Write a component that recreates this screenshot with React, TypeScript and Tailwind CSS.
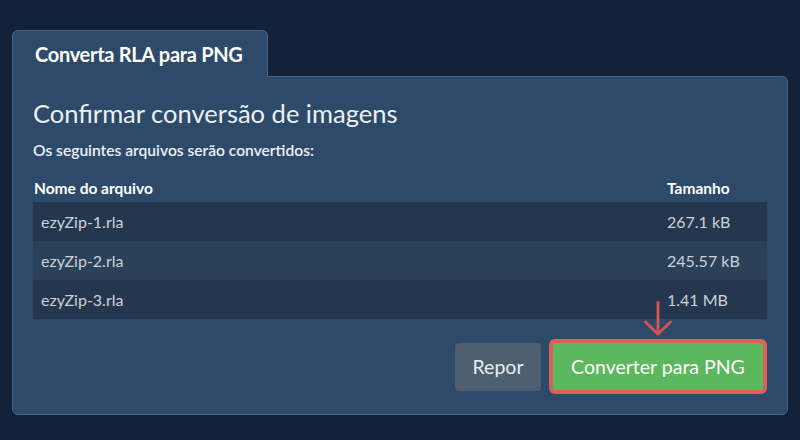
import { useState } from "react";

interface FileRow {
  id: string;
  name: string;
  size: string;
}

const files: FileRow[] = [
  { id: "1", name: "ezyZip-1.rla", size: "267.1 kB" },
  { id: "2", name: "ezyZip-2.rla", size: "245.57 kB" },
  { id: "3", name: "ezyZip-3.rla", size: "1.41 MB" },
];

export default function App() {
  const [converting, setConverting] = useState(false);

  return (
    <div
      className="w-full h-[440px] bg-[#11223a] pt-[30px] px-3 overflow-hidden"
      style={{ fontFamily: "Lato, 'Open Sans', sans-serif" }}
    >
      {/* Tab */}
      <div className="relative z-10 -mb-px w-[256px] h-[47px] bg-[#2d4a6a] border border-b-0 border-[#4a6584] rounded-t-md flex items-center pl-[22px]">
        <span className="text-[20px] font-bold text-white tracking-[-0.3px]">Converta RLA para PNG</span>
      </div>

      {/* Panel */}
      <div className="w-[776px] h-[339px] bg-[#2d4a6a] border border-[#4a6584] rounded-b-md rounded-tr-md pt-[21px] pl-[20px] pr-[20px]">
        <h2 className="text-[25.5px] leading-[30px] text-[#eef1f4]">Confirmar conversão de imagens</h2>
        <p className="mt-[13px] text-[15.6px] leading-[18px] font-semibold text-[#eef1f4]">
          Os seguintes arquivos serão convertidos:
        </p>

        {/* Table */}
        <div className="mt-[19px] w-[734px]">
          <div className="grid grid-cols-[1fr_100px] h-[24px] text-[15.5px] leading-[20px] font-bold text-white">
            <span className="pl-px">Nome do arquivo</span>
            <span>Tamanho</span>
          </div>
          {files.map((f, i) => (
            <div
              key={f.id}
              className={`grid grid-cols-[1fr_100px] h-[39px] items-center text-[16px] text-[#ccd1d8] ${
                i % 2 === 0 ? "bg-[#24374f]" : "bg-[#2a4159]"
              }`}
            >
              <span className="pl-[8px]">{f.name}</span>
              <span>{f.size}</span>
            </div>
          ))}
        </div>

        {/* Actions */}
        <div className="mt-[20px] w-[734px] flex items-center justify-end gap-[8px]">
          <button className="w-[86px] h-[48px] rounded bg-[#4e5f70] text-[19.5px] text-[#e9ecef]">Repor</button>
          <div className="relative">
            {/* pointer arrow */}
            <svg
              width="30"
              height="36"
              viewBox="0 0 30 36"
              fill="none"
              className="absolute left-[94px] top-[-38px]"
            >
              <path d="M15 1.5V33" stroke="#d9534f" strokeWidth="2.8" strokeLinecap="round" />
              <path d="M2.5 21L15 33L27.5 21" stroke="#d9534f" strokeWidth="2.8" strokeLinecap="round" strokeLinejoin="round" />
            </svg>
            <button
              onClick={() => setConverting(!converting)}
              className="w-[218px] h-[55px] rounded-md border-4 border-[#dc5f58] bg-[#5cb85c] text-[19.5px] text-white"
            >
              Converter para PNG
            </button>
          </div>
        </div>
      </div>
    </div>
  );
}
